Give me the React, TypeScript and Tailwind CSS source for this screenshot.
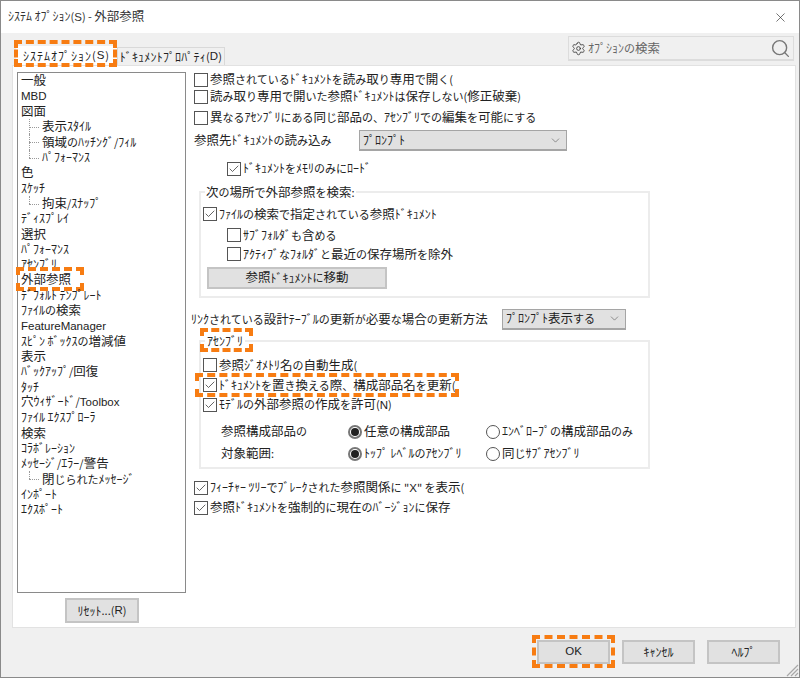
import React from 'react';
import { Check, ChevronDown, Search, Settings, X } from 'lucide-react';

const FONT = "font-['Noto_Sans_CJK_JP','Noto_Sans',sans-serif]";

// the dialog font is proportional: kanji are wide, hiragana and latin narrow
const Txt: React.FC<{ s: string }> = ({ s }) => (
  <>
    {s.split(/([\u4E00-\u9FFF]+|[A-Za-z0-9]+|[\uFF61-\uFF9F]+)/).filter(Boolean).map((p, i) => {
      if (/^[\u4E00-\u9FFF]/.test(p)) return <span key={i}>{p}</span>;
      if (/^[A-Za-z0-9]/.test(p)) return <span key={i} className="font-['Liberation_Sans',sans-serif] text-[11.5px]">{p}</span>;
      if (/^[\uFF61-\uFF9F]/.test(p)) return <span key={i} className="text-[12px]">{p}</span>;
      return <span key={i} className="text-[11px]">{p}</span>;
    })}
  </>
);

// orange dashed callout drawn over a control
const Callout: React.FC<{ className: string }> = ({ className }) => (
  <span className={`absolute border-[4px] border-dashed border-[#f77c12] pointer-events-none ${className}`} />
);

const CheckRow: React.FC<{ label: string; checked?: boolean; className?: string }> = ({ label, checked, className = '' }) => (
  <div className={`flex items-center h-[17px] whitespace-nowrap ${className}`}>
    <span className="w-[14px] h-[14px] border border-[#555] bg-white flex items-center justify-center shrink-0 mr-[2px]">
      {checked && <Check size={12} strokeWidth={1.5} className="text-[#333]" />}
    </span>
    <span><Txt s={label} /></span>
  </div>
);

const Radio: React.FC<{ label: string; on?: boolean; className?: string }> = ({ label, on, className = '' }) => (
  <div className={`flex items-center whitespace-nowrap ${className}`}>
    <span className={`w-[14px] h-[14px] rounded-full bg-white flex items-center justify-center shrink-0 mr-[2px] ${on ? 'border-2 border-[#777]' : 'border border-[#555]'}`}>
      {on && <span className="w-[8px] h-[8px] rounded-full bg-[#222]" />}
    </span>
    <span><Txt s={label} /></span>
  </div>
);

const Btn: React.FC<{ label: string; className?: string }> = ({ label, className = '' }) => (
  <div className={`flex items-center justify-center bg-[#e1e1e1] border-2 border-[#c4c4c4] text-[#222] ${className}`}><Txt s={label} /></div>
);

const Select: React.FC<{ label: string; className?: string }> = ({ label, className = '' }) => (
  <div className={`flex items-center justify-between bg-[#e1e1e1] border border-[#a5a5a5] border-b-2 pl-[3px] pr-[4px] ${className}`}>
    <span><Txt s={label} /></span>
    <ChevronDown size={13} strokeWidth={1} className="text-[#444]" />
  </div>
);

const tree: { t: string; child?: boolean; last?: boolean }[] = [
  { t: '一般' },
  { t: 'MBD' },
  { t: '図面' },
  { t: '表示ｽﾀｲﾙ', child: true },
  { t: '領域のﾊｯﾁﾝｸﾞ/ﾌｨﾙ', child: true },
  { t: 'ﾊﾟﾌｫｰﾏﾝｽ', child: true, last: true },
  { t: '色' },
  { t: 'ｽｹｯﾁ' },
  { t: '拘束/ｽﾅｯﾌﾟ', child: true, last: true },
  { t: 'ﾃﾞｨｽﾌﾟﾚｲ' },
  { t: '選択' },
  { t: 'ﾊﾟﾌｫｰﾏﾝｽ' },
  { t: 'ｱｾﾝﾌﾞﾘ' },
  { t: '外部参照' },
  { t: 'ﾃﾞﾌｫﾙﾄ ﾃﾝﾌﾟﾚｰﾄ' },
  { t: 'ﾌｧｲﾙの検索' },
  { t: 'FeatureManager' },
  { t: 'ｽﾋﾟﾝ ﾎﾞｯｸｽの増減値' },
  { t: '表示' },
  { t: 'ﾊﾞｯｸｱｯﾌﾟ/回復' },
  { t: 'ﾀｯﾁ' },
  { t: '穴ｳｨｻﾞｰﾄﾞ/Toolbox' },
  { t: 'ﾌｧｲﾙ ｴｸｽﾌﾟﾛｰﾗ' },
  { t: '検索' },
  { t: 'ｺﾗﾎﾞﾚｰｼｮﾝ' },
  { t: 'ﾒｯｾｰｼﾞ/ｴﾗｰ/警告' },
  { t: '閉じられたﾒｯｾｰｼﾞ', child: true, last: true },
  { t: 'ｲﾝﾎﾟｰﾄ' },
  { t: 'ｴｸｽﾎﾟｰﾄ' },
];

export default function App() {
  return (
    <div className={`relative w-[800px] h-[678px] flex flex-col border border-[#8a8a8a] bg-[#f0f0f0] text-[12.5px] leading-none text-[#222] ${FONT}`}>
      {/* title bar */}
      <div className="h-[32px] shrink-0 bg-white flex items-center justify-between pl-[7px] pr-[11px] text-[#333]">
        <span><Txt s="ｼｽﾃﾑ ｵﾌﾟｼｮﾝ(S) - 外部参照" /></span>
        <X size={15} strokeWidth={1} className="text-[#222]" />
      </div>

      {/* tabs + search */}
      <div className="h-[32px] shrink-0 flex items-end justify-between pl-[15px] pr-[5px]">
        <div className="relative flex items-end">
          <div className="w-[101px] h-[19px] bg-white flex items-center justify-center whitespace-nowrap tracking-[1px]"><Txt s="ｼｽﾃﾑ ｵﾌﾟｼｮﾝ(S)" /></div>
          <div className="w-[108px] h-[18px] border border-b-0 border-[#d9d9d9] flex items-center justify-center whitespace-nowrap tracking-[0.2px]"><Txt s="ﾄﾞｷｭﾒﾝﾄ ﾌﾟﾛﾊﾟﾃｨ(D)" /></div>
          <Callout className="-left-[2px] -top-[6px] w-[103px] h-[27px]" />
        </div>
        <div className="w-[226px] h-[25px] mb-[4px] flex items-center justify-between border-l border-b-2 border-t border-r border-[#dcdcdc] pl-[2px] pr-[2px] text-[#666]">
          <div className="flex items-center gap-[2px]">
            <Settings size={15} strokeWidth={1.3} className="text-[#333]" />
            <span><Txt s="ｵﾌﾟｼｮﾝの検索" /></span>
          </div>
          <Search size={21} strokeWidth={1.6} className="text-[#777]" />
        </div>
      </div>

      {/* main panel */}
      <div className="h-[563px] shrink-0 ml-[11px] mr-[3px] bg-white border border-[#e2e2e2] flex">
        {/* left tree */}
        <div className="w-[174px] shrink-0 pl-[4px] pt-[6px] flex flex-col items-start">
          <div className="w-[169px] h-[521px] border border-[#8a8a8a] bg-white pl-[3px]">
            {tree.map((n, i) => (
              <div key={i} className={`relative h-[15.32px] flex items-center whitespace-nowrap ${n.child ? 'pl-[21px]' : ''}`}>
                {n.child && (
                  <>
                    <span className={`absolute left-[8px] top-0 w-0 border-l border-dotted border-[#999] ${n.last ? 'h-[8px]' : 'h-full'}`} />
                    <span className="absolute left-[8px] top-[8px] w-[10px] h-0 border-t border-dotted border-[#999]" />
                  </>
                )}
                <span><Txt s={n.t} /></span>
                {n.t === '外部参照' && <Callout className="-left-[5px] -top-[5px] w-[68px] h-[24px]" />}
              </div>
            ))}
          </div>
          <Btn label="ﾘｾｯﾄ...(R)" className="w-[74px] h-[25px] mt-[5px] ml-[48px]" />
        </div>

        {/* right options */}
        <div className="flex-1 pl-[7px] pt-[5px]">
          <CheckRow label="参照されているﾄﾞｷｭﾒﾝﾄを読み取り専用で開く(" />
          <CheckRow label="読み取り専用で開いた参照ﾄﾞｷｭﾒﾝﾄは保存しない(修正破棄)" />
          <CheckRow label="異なるｱｾﾝﾌﾞﾘにある同じ部品の、ｱｾﾝﾌﾞﾘでの編集を可能にする" className="mt-[4px]" />

          <div className="flex items-center mt-[4px] h-[21px]">
            <span className="w-[165px] whitespace-nowrap"><Txt s="参照先ﾄﾞｷｭﾒﾝﾄの読み込み" /></span>
            <Select label="ﾌﾟﾛﾝﾌﾟﾄ" className="w-[208px] h-[21px]" />
          </div>

          <CheckRow label="ﾄﾞｷｭﾒﾝﾄをﾒﾓﾘのみにﾛｰﾄﾞ" checked className="ml-[33px] mt-[9px]" />

          <fieldset className="ml-[5px] mt-[9px] w-[451px] h-[112px] border-2 border-[#ececec] pl-[2px]">
            <legend className="ml-[2px] px-[1px]"><Txt s="次の場所で外部参照を検索:" /></legend>
            <CheckRow label="ﾌｧｲﾙの検索で指定されている参照ﾄﾞｷｭﾒﾝﾄ" checked className="mt-[7px]" />
            <CheckRow label="ｻﾌﾞﾌｫﾙﾀﾞも含める" className="ml-[24px] mt-[4px]" />
            <CheckRow label="ｱｸﾃｨﾌﾞなﾌｫﾙﾀﾞと最近の保存場所を除外" className="ml-[24px] mt-[2px]" />
            <Btn label="参照ﾄﾞｷｭﾒﾝﾄに移動" className="w-[180px] h-[22px] ml-[4px] mt-[4px] border" />
          </fieldset>

          <div className="flex items-center mt-[11px] h-[20px] -ml-[3px] whitespace-nowrap">
            <span className="w-[311px]"><Txt s="ﾘﾝｸされている設計ﾃｰﾌﾞﾙの更新が必要な場合の更新方法" /></span>
            <Select label="ﾌﾟﾛﾝﾌﾟﾄ表示する" className="w-[124px] h-[21px]" />
          </div>

          <fieldset className="relative ml-[5px] mt-[6px] w-[451px] h-[134px] border-2 border-[#ececec] pl-[2px]">
            <legend className="relative ml-[2px] px-[2px]">
              <Txt s="ｱｾﾝﾌﾞﾘ" />
              <Callout className="-left-[5px] -top-[7px] w-[53px] h-[24px]" />
            </legend>
            <CheckRow label="参照ｼﾞｵﾒﾄﾘ名の自動生成(" className="mt-[9px]" />
            <div className="relative">
              <CheckRow label="ﾄﾞｷｭﾒﾝﾄを置き換える際、構成部品名を更新(" checked className="mt-[3px]" />
              <Callout className="-left-[8px] -top-[4px] w-[264px] h-[24px]" />
            </div>
            <CheckRow label="ﾓﾃﾞﾙの外部参照の作成を許可(N)" checked className="mt-[3px]" />
            <div className="grid grid-cols-[127px_139px_1fr] grid-rows-[22px_22px] items-center mt-[7px] ml-[18px]">
              <span className="whitespace-nowrap"><Txt s="参照構成部品の" /></span>
              <Radio label="任意の構成部品" on />
              <Radio label="ｴﾝﾍﾞﾛｰﾌﾟの構成部品のみ" className="-ml-[1px]" />
              <span className="whitespace-nowrap"><Txt s="対象範囲:" /></span>
              <Radio label="ﾄｯﾌﾟ ﾚﾍﾞﾙのｱｾﾝﾌﾞﾘ" on />
              <Radio label="同じｻﾌﾞｱｾﾝﾌﾞﾘ" className="-ml-[1px]" />
            </div>
          </fieldset>

          <CheckRow label="ﾌｨｰﾁｬｰ ﾂﾘｰでﾌﾞﾚｰｸされた参照関係に &quot;X&quot; を表示(" checked className="mt-[10px]" />
          <CheckRow label="参照ﾄﾞｷｭﾒﾝﾄを強制的に現在のﾊﾞｰｼﾞｮﾝに保存" checked className="mt-[3px]" />
        </div>
      </div>

      {/* footer buttons */}
      <div className="flex-1 flex items-start justify-end gap-[12px] pr-[19px] pt-[12px]">
        <div className="relative">
          <Btn label="OK" className="w-[73px] h-[24px] border-[#0a78d7]" />
          <Callout className="-left-[5px] -top-[5px] w-[83px] h-[33px]" />
        </div>
        <Btn label="ｷｬﾝｾﾙ" className="w-[73px] h-[24px]" />
        <Btn label="ﾍﾙﾌﾟ" className="w-[73px] h-[24px]" />
      </div>

      {/* resize grip */}
      <svg className="absolute right-0 bottom-0" width="15" height="15" viewBox="0 0 15 15">
        <path d="M14 3L3 14M14 7L7 14M14 11L11 14" stroke="#a8a8a8" strokeWidth="1.2" />
      </svg>
    </div>
  );
}
